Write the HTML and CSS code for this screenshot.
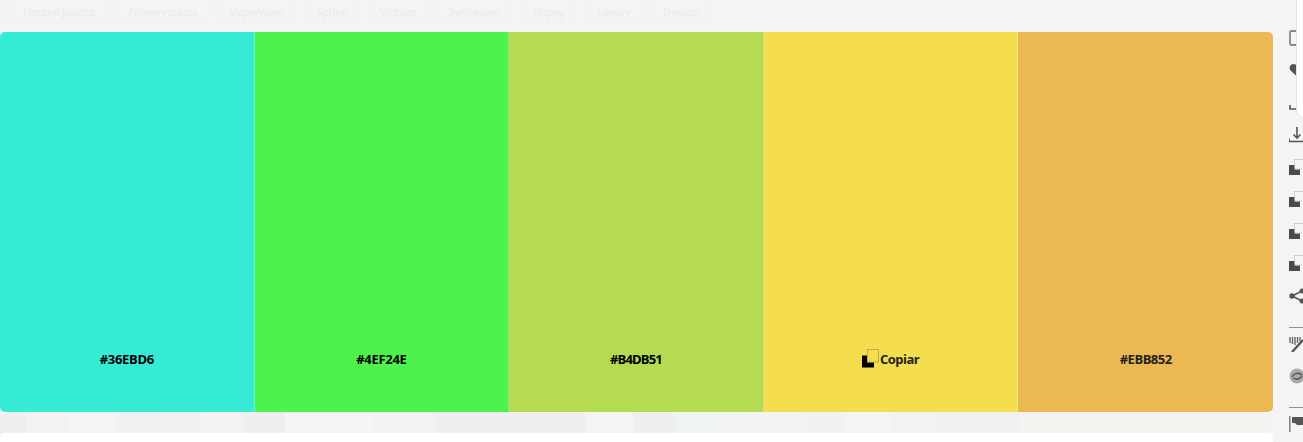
FILE: index.html
```html
<!DOCTYPE html>
<html lang="es">
<head>
<meta charset="utf-8">
<title>Paleta de colores</title>
<link rel="stylesheet" href="styles.css">
</head>
<body>
<svg class="defs" width="0" height="0" aria-hidden="true">
  <symbol id="dup" viewBox="0 0 16 16">
    <path d="M0 6h5.500v4.500H11V16H0z" fill="#4a4a4a"/>
    <rect x="5.500" y="0.500" width="10" height="9.500" fill="none" stroke="#a8a8a8" stroke-dasharray="1 1"/>
  </symbol>
</svg>
<div class="page">
  <main class="main">
    <nav class="tabs">
      <span class="chip chip-cut"></span>
      <span class="chip w1">Neutral palette</span>
      <span class="chip w2">Primary colors</span>
      <span class="chip w3">Vaporwave</span>
      <span class="chip w4">Spring</span>
      <span class="chip w5">Vintage</span>
      <span class="chip w6">Synthwave</span>
      <span class="chip w7">Happy</span>
      <span class="chip w8">Luxury</span>
      <span class="chip w9">Tropical</span>
    </nav>
    <section class="palette">
      <div class="swatch s1"><span class="hex">#36EBD6</span></div>
      <div class="swatch s2"><span class="hex">#4EF24E</span></div>
      <div class="swatch s3"><span class="hex tight">#B4DB51</span></div>
      <div class="swatch s4">
        <span class="hex copy">
          <svg class="copy-icon" viewBox="0 0 17 19" width="17" height="19">
            <path d="M0 6.500h5v7h7V18.500H0z" fill="#000"/>
            <rect x="5.500" y="0.500" width="11" height="12.500" fill="none" stroke="#8a7d35" stroke-dasharray="1 1"/>
          </svg>Copiar
        </span>
      </div>
      <div class="swatch s5"><span class="hex dim">#EBB852</span></div>
    </section>
    <div class="strip">
      <i class="b a"></i><i class="b b2"></i><i class="b c"></i><i class="b d"></i><i class="b e"></i><i class="b f"></i><i class="b g"></i><i class="b h"></i><i class="b i"></i><i class="b j"></i><i class="b k"></i><i class="b l"></i><i class="b m"></i><i class="b n"></i><i class="b o"></i><i class="b p"></i><i class="b q"></i><i class="b r"></i><i class="b s"></i>
    </div>
    <div class="card"></div>
  </main>
  <aside class="rail">
    <div class="popover"></div>
    <span class="tool"><svg viewBox="0 0 16 16" width="16" height="16"><path d="M7 1H2.500C1.500 1 1 1.500 1 2.500v11C1 14.500 1.500 15 2.500 15H7" fill="none" stroke="#888" stroke-width="1.800"/></svg></span>
    <span class="tool"><svg viewBox="0 0 16 16" width="16" height="16"><path d="M8 14.500 1.500 8.500C-.5 6 1 2 4.500 2 6 2 7.300 2.800 8 4c.7-1.200 2-2 3.500-2C15 2 16.500 6 14.500 8.500z" fill="#555"/></svg></span>
    <span class="tool"><svg viewBox="0 0 16 16" width="16" height="16"><path d="M1 11v4h14" fill="none" stroke="#555" stroke-width="1.600"/></svg></span>
    <span class="tool"><svg viewBox="0 0 16 16" width="16" height="16"><path d="M0 11.500v3h16M8 0v11M4.500 7.500 8 11l3.500-3.500" fill="none" stroke="#555" stroke-width="1.600"/></svg></span>
    <span class="tool"><svg width="16" height="16"><use href="#dup"/></svg></span>
    <span class="tool"><svg width="16" height="16"><use href="#dup"/></svg></span>
    <span class="tool"><svg width="16" height="16"><use href="#dup"/></svg></span>
    <span class="tool"><svg width="16" height="16"><use href="#dup"/></svg></span>
    <span class="tool"><svg viewBox="0 0 16 16" width="16" height="16"><path d="M14 2.500 3 8l11 5.500" fill="none" stroke="#555" stroke-width="1.500"/><circle cx="3" cy="8" r="2.700" fill="#555"/><circle cx="13" cy="3" r="2.500" fill="#555"/><circle cx="13" cy="13" r="2.500" fill="#555"/></svg></span>
    <hr class="rule">
    <span class="tool"><svg viewBox="0 0 16 16" width="16" height="16"><path d="M1 1v6M3.500 1v7M6 1v8M8.500 1v6M11 1v4" stroke="#666" stroke-width="1.400"/><path d="M3 16 14 4" stroke="#555" stroke-width="2.400"/></svg></span>
    <span class="tool"><svg viewBox="0 0 16 16" width="16" height="16"><circle cx="8" cy="8" r="7.500" fill="#aaa"/><path d="M3 9c2-4 7-5 10-2M4 10c3 2 6 2 9-2" fill="none" stroke="#555" stroke-width="1.300"/></svg></span>
    <hr class="rule">
    <span class="tool"><svg viewBox="0 0 16 16" width="16" height="16"><path d="M.8 0v16" stroke="#777" stroke-width="1.400"/><path d="M3 1h13v8H8L6 7H3z" fill="#555"/></svg></span>
  </aside>
</div>
</body>
</html>
```
FILE: styles.css
```css
* { box-sizing: border-box; }
html, body { margin: 0; height: 100%; overflow: hidden; background: #f4f4f4; }
body { font-family: "Open Sans", "Liberation Sans", sans-serif; }
.defs { position: absolute; }
.page { display: flex; width: 1303px; height: 442px; overflow: hidden; }
.main { width: 1273px; flex: none; }
.tabs { display: flex; gap: 9px; height: 32px; margin-left: -7px; overflow: hidden; }
.chip {
  display: flex; align-items: center; justify-content: center;
  flex: none; height: 23px; border: 1px solid #f0f0f0; border-top-color: #f2f2f2; border-radius: 4px;
  color: #ebebeb; font-size: 11px; font-weight: 600; letter-spacing: -.6px; filter: blur(.3px);
}
.chip-cut { width: 9px; }
.w1 { width: 96px; } .w2 { width: 93px; } .w3 { width: 78px; }
.w4 { width: 54px; } .w5 { width: 60px; } .w6 { width: 75px; }
.w7 { width: 55px; } .w8 { width: 57px; } .w9 { width: 60px; }
.palette {
  display: grid; grid-template-columns: repeat(5, 1fr); height: 380px;
  border-radius: 5px; overflow: hidden;
}
.swatch {
  display: flex; align-items: flex-end; justify-content: center;
  padding-bottom: 44px; border-right: 1px solid rgba(255, 255, 255, .25);
}
.swatch:last-child { border-right: 0; }
.s1 { background: #36ebd6; } .s2 { background: #4ef24e; } .s3 { background: #b4db51; }
.s4 { background: #f4dd4e; } .s5 { background: #ebb852; }
.hex { font-size: 13px; line-height: 18px; font-weight: 700; letter-spacing: -.3px; color: #000; }
.hex.tight { letter-spacing: -.85px; }
.hex.dim { color: #222; letter-spacing: -.5px; }
.copy { display: flex; align-items: center; gap: 1px; letter-spacing: -.5px; color: #222; }
.copy-icon { margin: 0; }
.strip { display: flex; height: 20px; margin-top: 1px; }
.b { display: block; height: 100%; flex: none; }
.a { width: 26px; background: #efefed; } .b2 { width: 42px; background: #f3f1f1; } .c { width: 47px; background: #f5f5f5; }
.d { width: 43px; background: #f0f1f3; } .e { width: 42px; background: #f1f1ef; } .f { width: 43px; background: #f4f3f1; }
.g { width: 42px; background: #efefef; } .h { width: 88px; background: #f5f5f5; } .i { width: 62px; background: #f0f2f3; }
.j { width: 151px; background: #f0efee; } .k { width: 47px; background: #f5f5f5; } .l { width: 42px; background: #efefef; }
.m { width: 42px; background: #f0f3f3; } .n { width: 85px; background: #f2f3f4; } .o { width: 42px; background: #f1f1f3; }
.p { width: 48px; background: #f4f4f4; } .q { width: 43px; background: #f3f1f1; } .r { width: 84px; background: #eff0f1; }
.s { flex: 1; background: #f3f3f0; }
.card { height: 10px; background: #fff; border-radius: 5px 5px 0 0; }
.rail { position: relative; flex: 1; padding: 22px 0 0 16px; }
.popover {
  position: absolute; z-index: 1; top: -12px; left: 23px; width: 40px; height: 131px;
  background: #fff; border: 1px solid #e2e2e2; border-radius: 10px;
}
.tool { display: flex; align-items: center; width: 16px; height: 32.200px; }
.tool svg { display: block; flex: none; filter: blur(.35px); }
.rule { width: 30px; height: 1px; margin: 15px 0 0; border: 0; background: #8f8f8f; }
```
